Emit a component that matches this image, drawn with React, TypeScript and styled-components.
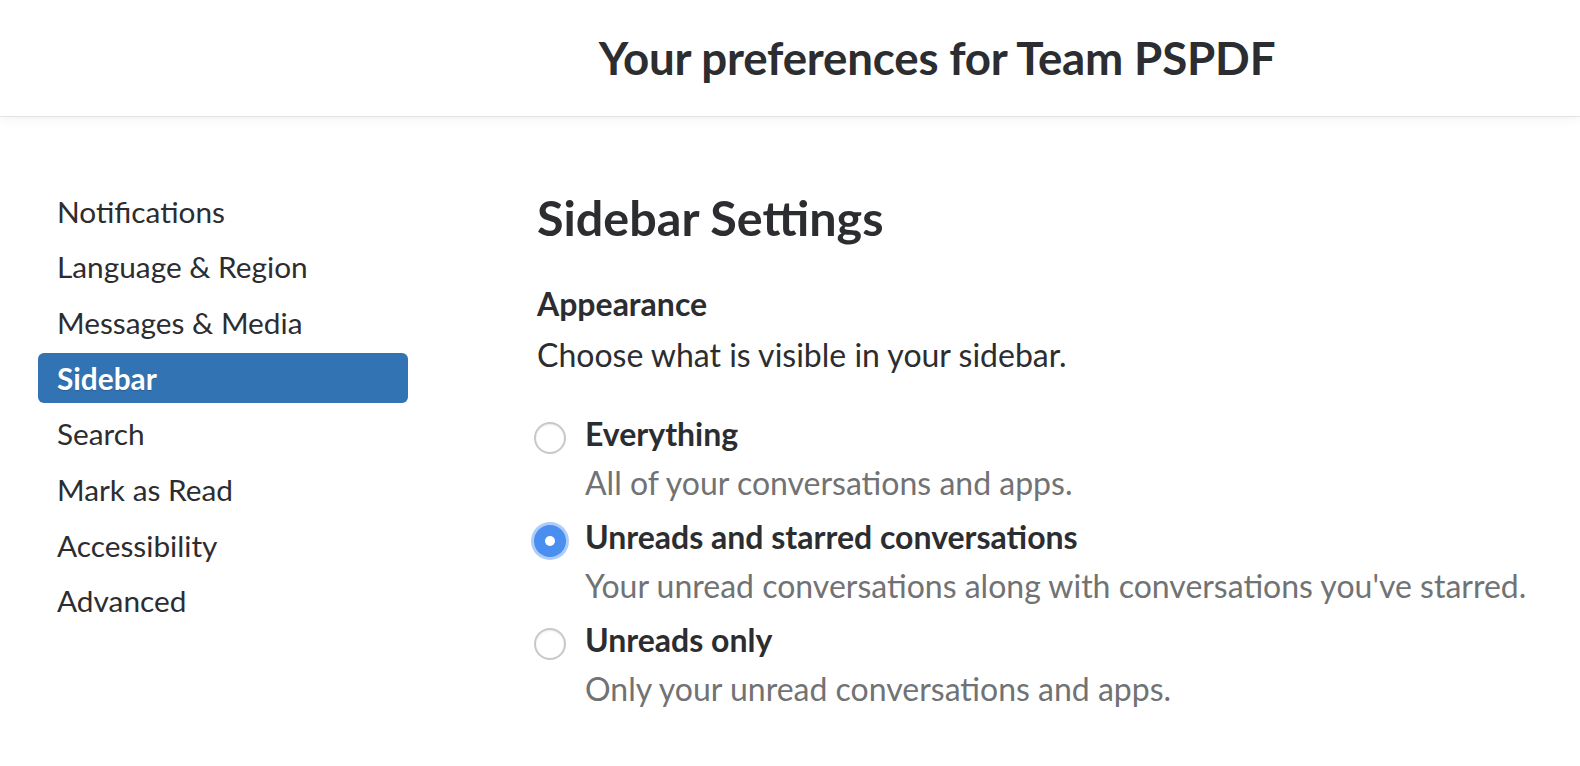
import React, { useState } from "react";
import styled, { createGlobalStyle } from "styled-components";

const GlobalStyle = createGlobalStyle`
  html, body {
    margin: 0;
    padding: 0;
    background: #ffffff;
  }
  body {
    font-family: Lato, "Noto Sans", sans-serif;
    color: #2c2d30;
    -webkit-font-smoothing: antialiased;
  }
`;

const Page = styled.div`
  width: 1580px;
  height: 766px;
  overflow: hidden;
  background: #fff;
`;

const Header = styled.header`
  height: 117px;
  display: flex;
  align-items: center;
  justify-content: center;
  padding-left: 294px;
  box-sizing: border-box;
  border-bottom: 1px solid #e3e3e3;
  box-shadow: 0 2px 10px rgba(0, 0, 0, 0.06);
  position: relative;
`;

const Title = styled.h1`
  margin: 0 0 2px;
  font-size: 45.7px;
  font-weight: 700;
  letter-spacing: -0.2px;
  color: #2c2d30;
`;

const Body = styled.div`
  display: grid;
  grid-template-columns: 370px 1fr;
  column-gap: 126px;
  padding: 69px 0 0 38px;
`;

const Nav = styled.nav`
  display: flex;
  flex-direction: column;
  gap: 5.7px;
`;

const NavItem = styled.a<{ $active?: boolean }>`
  height: 50px;
  display: flex;
  align-items: center;
  padding: 0 19px;
  border-radius: 6px;
  font-size: 29.8px;
  font-weight: ${(p) => (p.$active ? 700 : 400)};
  color: ${(p) => (p.$active ? "#ffffff" : "#2c2d30")};
  background: ${(p) => (p.$active ? "#3274b3" : "transparent")};
  text-shadow: ${(p) => (p.$active ? "0 1px 1px rgba(0,0,0,0.2)" : "none")};
  cursor: pointer;
  text-decoration: none;
`;

const Content = styled.section`
  display: flex;
  flex-direction: column;
  padding-left: 3px;
`;

const SectionTitle = styled.h2`
  margin: 1px 0 0;
  font-size: 48.5px;
  font-weight: 700;
  line-height: 60px;
  color: #2c2d30;
`;

const SubTitle = styled.h3`
  margin: 32px 0 0;
  font-size: 32px;
  font-weight: 700;
  line-height: 50px;
`;

const Lead = styled.p`
  margin: 0;
  font-size: 32px;
  line-height: 52px;
`;

const Options = styled.div`
  display: flex;
  flex-direction: column;
  margin-top: 27px;
  gap: 6px;
`;

const Option = styled.label`
  display: grid;
  grid-template-columns: 32px 1fr;
  column-gap: 16px;
  cursor: pointer;
`;

const Radio = styled.span<{ $checked?: boolean }>`
  width: 32px;
  height: 32px;
  box-sizing: border-box;
  border-radius: 50%;
  margin: 14px 0 0 -3px;
  border: ${(p) => (p.$checked ? "none" : "2px solid #c8c8c8")};
  background: ${(p) => (p.$checked ? "#4a8ff0" : "#fff")};
  box-shadow: ${(p) =>
    p.$checked ? "0 0 0 3px rgba(74,143,240,0.45)" : "inset 0 1px 2px rgba(0,0,0,0.08)"};
  display: flex;
  align-items: center;
  justify-content: center;
  &::after {
    content: "";
    display: ${(p) => (p.$checked ? "block" : "none")};
    width: 10px;
    height: 10px;
    border-radius: 50%;
    background: #fff;
  }
`;

const OptionText = styled.div`
  display: flex;
  flex-direction: column;
`;

const OptionLabel = styled.span`
  font-size: 32px;
  font-weight: 700;
  line-height: 52px;
`;

const OptionHint = styled.span`
  font-size: 32px;
  line-height: 45px;
  color: #717274;
`;

const navItems = [
  "Notifications",
  "Language & Region",
  "Messages & Media",
  "Sidebar",
  "Search",
  "Mark as Read",
  "Accessibility",
  "Advanced",
];

const options = [
  { id: "all", label: "Everything", hint: "All of your conversations and apps." },
  {
    id: "unreads_starred",
    label: "Unreads and starred conversations",
    hint: "Your unread conversations along with conversations you've starred.",
  },
  { id: "unreads", label: "Unreads only", hint: "Only your unread conversations and apps." },
];

const App = () => {
  const [selected, setSelected] = useState("unreads_starred");

  return (
    <Page>
      <GlobalStyle />
      <Header>
        <Title>Your preferences for Team PSPDF</Title>
      </Header>
      <Body>
        <Nav>
          {navItems.map((item) => (
            <NavItem key={item} $active={item === "Sidebar"}>
              {item}
            </NavItem>
          ))}
        </Nav>
        <Content>
          <SectionTitle>Sidebar Settings</SectionTitle>
          <SubTitle>Appearance</SubTitle>
          <Lead>Choose what is visible in your sidebar.</Lead>
          <Options>
            {options.map((opt) => (
              <Option key={opt.id} onClick={() => setSelected(opt.id)}>
                <Radio $checked={selected === opt.id} />
                <OptionText>
                  <OptionLabel>{opt.label}</OptionLabel>
                  <OptionHint>{opt.hint}</OptionHint>
                </OptionText>
              </Option>
            ))}
          </Options>
        </Content>
      </Body>
    </Page>
  );
};

export default App;
